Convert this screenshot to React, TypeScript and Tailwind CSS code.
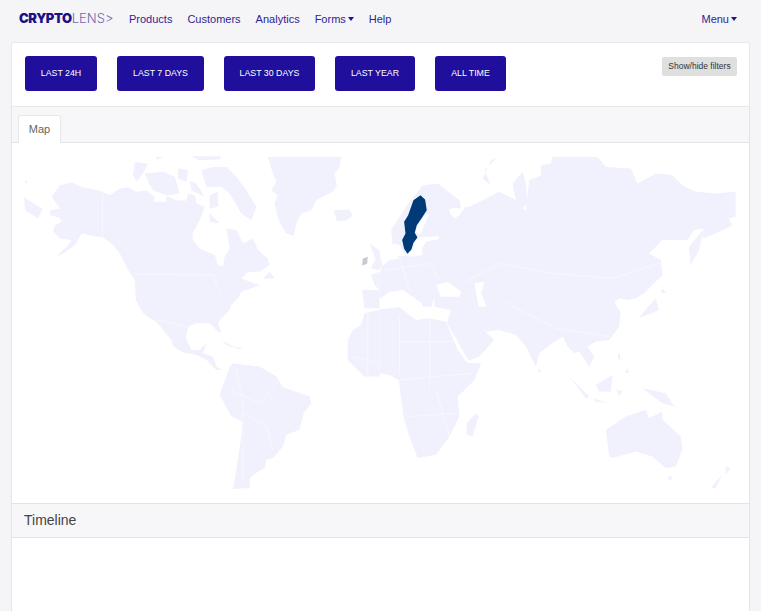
const rangeButtons = [
  { label: "LAST 24H", width: "w-[72px]" },
  { label: "LAST 7 DAYS", width: "w-[87px]" },
  { label: "LAST 30 DAYS", width: "w-[91px]" },
  { label: "LAST YEAR", width: "w-[80px]" },
  { label: "ALL TIME", width: "w-[71px]" },
];

const Caret = () => (
  <span className="ml-[2px] inline-block align-[2px] border-x-[3.5px] border-t-[4px] border-x-transparent border-t-[#1f1489]" />
);

// land shapes traced from the map, in 3x crop coordinates
const westLand = [
  "M155 140L180 105 215 97 250 112 300 122 330 135 360 115 385 112 410 125 440 122 465 140 460 155 500 155 500 138 530 150 560 152 565 130 585 135 590 160 615 170 600 210 578 250 580 270 600 295 645 315 655 345 670 350 675 320 690 295 680 235 710 240 730 280 760 265 775 300 805 325 810 345 780 365 745 365 725 385 750 395 780 405 755 415 725 425 715 445 695 465 690 480 660 510 655 520 665 550 655 545 630 520 590 520 565 530 558 565 575 600 600 600 620 580 610 610 640 620 650 650 665 660 650 660 620 630 590 615 550 608 520 590 515 570 490 540 470 515 450 505 430 490 408 450 405 390 385 360 360 310 340 285 310 262 280 258 245 250 225 285 190 310 170 318 205 285 215 270 180 265 160 245 165 225 185 215 180 203 150 195 150 180 180 175Z",
  "M805 20L1025 20 1020 50 1005 70 1012 105 1000 125 950 150 935 180 905 190 890 220 882 258 860 250 835 205 825 160 835 135 815 120 830 95 815 55Z",
  "M1003 180L1050 178 1060 195 1040 212 1012 212Z",
  "M690 650L700 640 780 650 830 680 850 712 930 740 935 760 912 790 900 840 860 855 850 890 820 925 800 930 795 955 770 970 750 985 750 1015 700 1018 710 960 725 860 728 815 695 800 660 735 680 680Z",
  "M665 570L700 590 730 595 720 598 680 585Z",
  "M790 385L810 365 825 385Z",
  "M405 35L445 40 430 70 410 95 400 75Z",
  "M435 70L490 65 525 80 540 130 500 135 460 120 445 95Z",
  "M535 55L565 60 560 95 535 85Z",
  "M605 60L640 50 680 50 710 80 740 120 770 170 755 210 725 190 690 130 665 110 620 110Z",
  "M570 90L590 100 615 140 575 120Z",
  "M630 135L655 125 655 170 630 175Z",
  "M630 190L660 220 630 215Z",
  "M470 20L490 20 470 30Z",
  "M575 18L665 18 660 28 600 30Z",
  "M75 90L85 95 75 100Z",
  "M72 140L100 160 128 175 115 205 75 180Z",
  "M1110 280L1140 300 1140 360 1115 355 1128 325Z",
  "M1115 375L1140 365 1140 420 1125 405Z",
  "M1088 420L1140 420 1140 475 1095 475Z",
  "M1095 490L1140 480 1140 680 1095 680 1045 630 1045 570 1060 540 1085 525Z",
];

const eastLand = [
  "M35 240L80 170 130 105 175 100 240 150 245 170 270 170 330 140 360 125 410 150 400 100 430 65 440 100 445 160 430 175 440 180 450 90 485 75 485 45 515 40 520 20 655 20 680 50 755 55 775 100 830 70 880 75 910 105 950 125 1010 130 1070 125 1070 200 1050 205 1060 225 1000 255 970 265 975 235 945 240 925 270 850 270 810 310 845 330 850 375 820 405 795 430 770 445 750 450 720 445 705 455 725 490 720 530 690 570 650 575 625 590 645 620 630 650 600 605 585 610 565 590 550 560 510 585 480 610 470 650 440 590 410 555 360 540 320 545 290 520 345 570 300 620 268 632 243 590 203 520 215 480 165 470 165 445 155 470 130 470 120 425 135 465 100 440 70 420 30 425 10 440 0 445 0 370 12 345 30 330 60 325 40 290Z",
  "M0 478L60 472 110 510 150 505 200 515 235 600 265 640 305 640 285 690 235 740 240 800 210 860 170 915 115 925 90 860 72 800 58 690 30 675 0 670Z",
  "M0 300L10 355 0 357Z",
  "M290 790L298 800 280 860 262 855 262 820Z",
  "M930 290L975 235 960 300 935 345Z",
  "M850 415L862 428 845 430Z",
  "M830 445L840 480 780 505 790 490Z",
  "M720 600L725 630 716 625Z",
  "M745 655L750 670 738 668Z",
  "M650 705L700 675 695 725 660 725Z",
  "M570 680L630 740 620 745Z",
  "M640 745L690 760 650 755Z",
  "M712 718L730 725 720 738Z",
  "M790 715L860 730 885 770 850 760Z",
  "M680 840L740 800 800 780 810 805 850 785 850 810 905 860 910 900 890 950 860 955 820 920 770 905 700 925 690 920Z",
  "M865 980L880 980 875 995Z",
  "M1040 950L1055 955 1040 975Z",
  "M1030 975L1010 1015 995 1015Z",
  "M476 655L485 662 480 672Z",
  "M355 20L335 30 310 85 335 105 315 60Z",
];

const eastWater = [
  "M25 300L45 280 62 285 70 305 80 318 60 318 35 320Z",
  "M80 316L95 300 108 275 115 258 125 262 180 258 175 268 140 275 128 295 130 315 100 320Z",
  "M107 240L125 210 140 190 148 195 135 225 120 255Z",
  "M208 178L225 172 240 175 252 160 258 172 240 195 225 205 215 195Z",
  "M170 405L205 395 245 425 240 440 185 440Z",
  "M285 400L315 395 305 430 322 470 298 470Z",
];

const westBorders = [
  "M308 125L308 262",
  "M410 372L640 375 660 430",
  "M470 510L520 520 560 530",
  "M710 660L730 760 730 1000",
  "M730 790L800 830 820 900",
  "M690 720L780 760 840 690",
  "M1105 480L1105 680",
  "M1060 620L1140 640",
];

const eastBorders = [
  "M250 400L360 340 520 370 700 385 840 340",
  "M60 500L60 670",
  "M150 510L150 720",
  "M60 575L230 575",
  "M60 690L280 670",
  "M170 720L210 860",
  "M90 800L240 790",
  "M360 440L400 470 520 530",
  "M20 360L150 340 180 390",
  "M60 325L90 420",
  "M530 535L690 560",
];

const WorldMap = () => (
  <svg viewBox="12 143 738 360" className="block w-full h-[360px]">
    <g transform="translate(0 150) scale(0.3333)">
      {westLand.map((d) => (
        <path key={d} d={d} fill="#f1f0fd" />
      ))}
      {westBorders.map((d) => (
        <path key={d} d={d} fill="none" stroke="#fbfaff" strokeWidth="2" />
      ))}
      <path d="M1090 325L1105 320 1103 340 1088 347Z" fill="#c9c9d2" />
    </g>
    <g transform="translate(380 150) scale(0.3333)">
      {eastLand.map((d) => (
        <path key={d} d={d} fill="#f1f0fd" />
      ))}
      {eastBorders.map((d) => (
        <path key={d} d={d} fill="none" stroke="#fbfaff" strokeWidth="2" />
      ))}
      {eastWater.map((d) => (
        <path key={d} d={d} fill="#ffffff" />
      ))}
      <path
        d="M123 135L137 148 142 180 126 205 112 225 106 248 114 262 102 278 96 298 84 311 74 296 68 270 78 250 74 215 86 195 102 150Z"
        fill="#003b78"
      />
    </g>
  </svg>
);

export default function App() {
  return (
    <div className="h-[611px] overflow-hidden bg-[#f5f5f8] font-['Liberation_Sans',sans-serif]">
      <nav className="h-[42px] flex items-center pl-[19px] pr-[24px] pb-[4px] text-[11px] text-[#2f2490]">
        <div className="w-[110px] text-[13px] font-['Inter',sans-serif] text-[#1d1088]">
          <span className="font-black tracking-[-0.4px]">CRYPTO</span>
          <span className="font-light text-[#6f69ad]">LENS&gt;</span>
        </div>
        <div className="flex gap-[15px]">
          <span>Products</span>
          <span>Customers</span>
          <span>Analytics</span>
          <span>Forms<Caret /></span>
          <span>Help</span>
        </div>
        <span className="ml-auto">Menu<Caret /></span>
      </nav>

      <div className="mx-[11px] flex flex-col">
        <section className="h-[65px] bg-white rounded-t-[3px] border border-[#e8e8ea] flex justify-between pl-[13px] pr-[12px] pt-[13px]">
          <div className="flex gap-5">
            {rangeButtons.map((b) => (
              <button
                key={b.label}
                className={`${b.width} h-[35px] pt-px rounded-[3px] bg-[#1f0f9c] text-white text-[8.8px]`}
              >
                {b.label}
              </button>
            ))}
          </div>
          <button className="w-[75px] h-[19px] mt-px rounded-[2px] bg-[#dfdfdf] text-[#333] text-[8.5px]">
            Show/hide filters
          </button>
        </section>

        <section className="bg-white border-x border-b border-[#e4e4e6]">
          <div className="h-[36px] bg-[#f7f6f9] border-b border-[#e4e4e8] flex items-end pl-[6px]">
            <div className="w-[43px] h-[28px] -mb-px bg-white border border-b-0 border-[#e8e8ec] rounded-t-[3px] flex items-center justify-center text-[11px] text-[#666]">
              Map
            </div>
          </div>
          <WorldMap />
        </section>

        <section className="bg-white border-x border-[#e4e4e6]">
          <div className="h-[34px] bg-[#f7f6f9] border-b border-[#e4e4e8] flex items-center pl-[12px] text-[14px] text-[#444]">
            Timeline
          </div>
          <div className="h-[120px]" />
        </section>
      </div>
    </div>
  );
}
